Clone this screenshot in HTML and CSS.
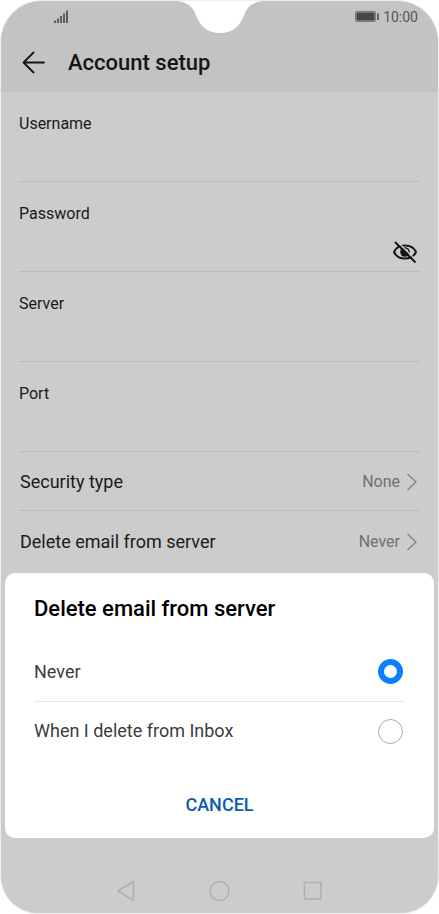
FILE: index.html
```html
<!DOCTYPE html>
<html lang="en">
<head>
<meta charset="utf-8">
<meta name="viewport" content="width=device-width, initial-scale=1">
<title>Account setup</title>
<link rel="stylesheet" href="styles.css">
</head>
<body>
<div class="phone">
  <svg class="notch" width="92" height="33" viewBox="0 0 92 33" aria-hidden="true"><path d="M0 0V1C13 1 19 7 22 15C26 26 33 33 46 33C59 33 66 26 70 15C73 7 79 1 92 1V0Z" fill="#fff"/></svg>
  <header class="top">
    <div class="status">
      <svg width="14" height="14" viewBox="0 0 14 14" stroke="#4c4c4c" stroke-width="1.700" aria-hidden="true"><path d="M1 10.500v2.500M4 8.500v4.500M7 6v7M10 3.500v9.500M13 .5v12.500"/></svg>
      <div class="status-right">
        <svg width="24" height="12" viewBox="0 0 24 12" aria-hidden="true"><rect x=".5" y=".5" width="20" height="10" rx="1" fill="#aaa" stroke="#777"/><rect x="1.500" y="1.500" width="18" height="8" fill="#484848"/><rect x="22" y="2.500" width="1.800" height="6.500" fill="#555"/></svg>
        <span>10:00</span>
      </div>
    </div>
    <div class="bar">
      <button class="icon" aria-label="Back"><svg width="24" height="24" viewBox="0 0 24 24" fill="none" stroke="#151515" stroke-width="1.800" stroke-linecap="round" stroke-linejoin="round"><path d="M12.500 1.500L2.500 11.500L12.500 21.500M2.500 11.500H23"/></svg></button>
      <h1>Account setup</h1>
    </div>
  </header>
  <main>
    <div class="field"><label for="user">Username</label><input id="user" type="text"></div>
    <div class="field"><label for="pass">Password</label>
      <div class="entry"><input id="pass" type="password"><button class="icon" aria-label="Show password"><svg width="26" height="24" viewBox="0 0 26 24" fill="none" stroke="#161616" stroke-width="2"><path d="M2 12C4 7.500 8 5.500 13 5.500S22 7.500 24 12C22 16.500 18 18.500 13 18.500S4 16.500 2 12Z"/><circle cx="13" cy="12" r="4.800" fill="#161616" stroke="none"/><path d="M13.500 9a3 3 0 0 1 2.500 2.500" stroke="#ccc" stroke-width="1.200"/><path d="M4.500 1L25 21" stroke="#ccc" stroke-width="1.400"/><path d="M3 2L23.500 22.500"/></svg></button></div>
    </div>
    <div class="field"><label for="server">Server</label><input id="server" type="text"></div>
    <div class="field"><label for="port">Port</label><input id="port" type="text"></div>
    <button class="row"><span>Security type</span><span class="value">None<svg width="10" height="18" viewBox="0 0 10 18" fill="none" stroke="#888" stroke-width="1.600" stroke-linecap="round" stroke-linejoin="round"><path d="M1 1.500L9 9L1 16.500"/></svg></span></button>
    <button class="row"><span>Delete email from server</span><span class="value">Never<svg width="10" height="18" viewBox="0 0 10 18" fill="none" stroke="#888" stroke-width="1.600" stroke-linecap="round" stroke-linejoin="round"><path d="M1 1.500L9 9L1 16.500"/></svg></span></button>
  </main>
  <section class="dialog" role="dialog" aria-labelledby="title">
    <h2 id="title">Delete email from server</h2>
    <label class="option"><span>Never</span><input type="radio" name="delete" checked></label>
    <label class="option"><span>When I delete from Inbox</span><input type="radio" name="delete"></label>
    <button class="cancel">CANCEL</button>
  </section>
  <nav class="keys">
    <button class="icon" aria-label="Back"><svg width="20" height="22" viewBox="0 0 20 22" fill="none" stroke="#b0b0b0" stroke-width="1.600" stroke-linejoin="round"><path d="M16.500 1.500V20.500L.8 11Z"/></svg></button>
    <button class="icon" aria-label="Home"><svg width="22" height="22" viewBox="0 0 22 22" fill="none" stroke="#b0b0b0" stroke-width="1.600"><circle cx="10.500" cy="11" r="9.500"/></svg></button>
    <button class="icon" aria-label="Recent apps"><svg width="20" height="20" viewBox="0 0 20 20" fill="none" stroke="#b0b0b0" stroke-width="1.600" stroke-linejoin="round"><rect x="1.500" y="1.500" width="16.500" height="16.500"/></svg></button>
  </nav>
</div>
</body>
</html>
```
FILE: styles.css
```css
* { box-sizing: border-box; }
body { margin: 0; background: #fff; font-family: Roboto, "Liberation Sans", sans-serif; color: #1a1a1a; }
button { border: 0; padding: 0; background: none; font: inherit; color: inherit; cursor: pointer; }
svg { display: block; flex: none; }
h1, h2 { margin: 0; font-weight: 500; font-size: 22px; line-height: 28px; }
.phone {
  position: relative;
  display: flex;
  flex-direction: column;
  min-height: 100vh;
  border: 1px solid #eee;
  border-radius: 42px 42px 38px 38px;
  background: #ccc;
  overflow: hidden;
}
.notch { position: absolute; top: -1px; left: 50%; margin-left: -46px; }
.top { background: #c3c3c3; }
.status { display: flex; justify-content: space-between; align-items: center; height: 31px; padding: 0 20px 0 53px; }
.status-right { display: flex; align-items: center; gap: 4px; font-size: 14px; line-height: 16px; color: #555; }
.bar { display: flex; align-items: center; gap: 23px; height: 60px; padding: 1px 20px 0; }
h1 { color: #151515; }
.field { display: flex; flex-direction: column; height: 90px; margin: 0 18px; padding-top: 21px; border-bottom: 1px solid #bbb; }
.field label { font-size: 16px; line-height: 22px; }
.field input { flex: 1; min-width: 0; width: 100%; border: 0; padding: 0; background: none; font: inherit; outline: 0; }
.entry { display: flex; flex: 1; align-items: flex-end; }
.entry .icon { margin: 0 2px 7px 0; }
.row { display: flex; justify-content: space-between; align-items: center; width: calc(100% - 36px); height: 59px; margin: 0 18px; padding: 2px 3px 0 1px; font-size: 18px; line-height: 24px; text-align: left; border-bottom: 1px solid #bbb; }
.row:last-child { border-bottom: 0; }
.value { display: flex; align-items: center; gap: 7px; font-size: 16px; color: #707070; }
.dialog { display: flex; flex-direction: column; margin: 3px 4px 0; padding: 22px 29px 14px; border-radius: 10px; background: #fff; }
h2 { margin-bottom: 19px; color: #000; }
.option { display: flex; justify-content: space-between; align-items: center; height: 59px; padding-right: 2px; font-size: 18px; line-height: 24px; color: #3c3c3c; }
.option + .option { border-top: 1px solid #e5e5e5; }
.option input { appearance: none; width: 25px; height: 25px; margin: 0; border: 1px solid #aaa; border-radius: 50%; }
.option input:checked { border: 6px solid #0a7fff; }
.cancel { align-self: center; height: 40px; margin-top: 24px; font-size: 18px; font-weight: 500; color: #0a5cad; }
.keys { display: flex; justify-content: center; align-items: center; gap: 72px; padding: 42px 0 11px; }
```
